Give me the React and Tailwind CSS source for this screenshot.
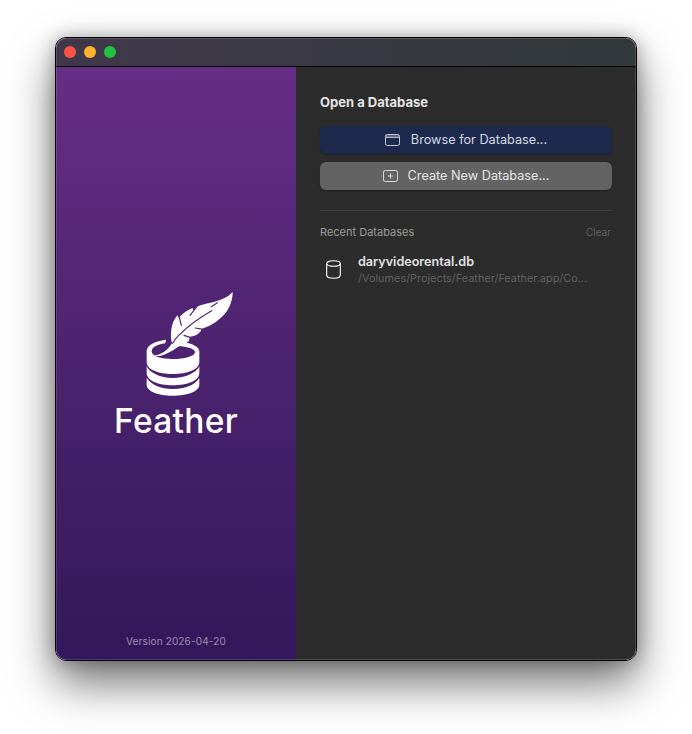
import React from "react";

function Logo() {
  return (
    <svg width="100" height="108" viewBox="0 0 300 324" fill="#fff" className="ml-[28px] shrink-0">
      <path d="M278 12 C262 30 238 38 212 44 C196 47 182 50 170 56 L160 70 L158 60 C142 66 128 76 116 90 L112 82 C102 94 96 108 94 124 C92 140 92 152 96 166 C88 180 76 192 60 198 C52 202 44 202 40 200 C48 205 60 206 72 200 C88 194 102 186 112 178 C122 172 136 170 146 160 L150 146 C160 146 172 142 182 130 L186 122 C198 118 214 112 232 98 C252 84 266 66 272 46 C276 34 278 24 278 12 Z" />
      <path d="M215 68 C180 88 140 118 116 142 C108 150 102 158 98 166" fill="none" stroke="#4c2470" strokeWidth="3.5" strokeLinecap="round" />
      <path d="M172 54 L150 82 M118 88 L124 112 M190 124 L166 120 M150 148 L132 142 M232 44 L214 56" fill="none" stroke="#4c2470" strokeWidth="3.5" strokeLinecap="round" />
      <path fillRule="evenodd" d="M78 155 C42 160 20 172 20 190 L20 222 C20 245 55 258 98 258 C142 258 178 245 178 222 L178 190 C178 178 160 168 134 163 L118 174 C148 177 165 184 165 192 C165 205 135 213 98 213 C62 213 35 205 35 190 C35 178 50 170 76 166 Z" />
      <path d="M20 235 C30 255 60 270 98 270 C138 270 168 255 178 235 L178 255 C178 278 142 292 98 292 C55 292 20 278 20 255 Z" />
      <path d="M20 270 C35 290 60 303 98 303 C138 303 165 290 178 270 L178 290 C178 310 142 323 98 323 C55 323 20 310 20 290 Z" />
    </svg>
  );
}

function FolderIcon() {
  return (
    <svg width="15" height="12" viewBox="0 0 15 12" fill="none" stroke="currentColor" strokeWidth="0.9">
      <rect x="0.5" y="0.5" width="14" height="11" rx="1.8" />
      <path d="M0.5 3.4 H14.5" />
      <path d="M1 1 H14 V3 H1 Z" fill="currentColor" fillOpacity="0.35" stroke="none" />
    </svg>
  );
}

function PlusIcon() {
  return (
    <svg width="15" height="12" viewBox="0 0 15 12" fill="none" stroke="currentColor" strokeWidth="0.9">
      <rect x="0.5" y="0.5" width="14" height="11" rx="1.8" />
      <path d="M7.5 3.4 V8.6 M4.9 6 H10.1" />
    </svg>
  );
}

function DbIcon() {
  return (
    <svg width="15" height="19" viewBox="0 0 15 19" fill="none" stroke="#fff" strokeWidth="1.1" className="ml-[6px] shrink-0">
      <ellipse cx="7.5" cy="3.5" rx="6.8" ry="2.8" />
      <path d="M0.7 3.5 V15 C0.7 17 3.8 18.3 7.5 18.3 C11.2 18.3 14.3 17 14.3 15 V3.5" />
    </svg>
  );
}

export default function App() {
  return (
    <div className="w-[692px] h-[734px] bg-white pt-[37px] pl-[55px] font-['Inter','Liberation_Sans',sans-serif] overflow-hidden">
      <div className="relative w-[582px] h-[624px] rounded-[11px] overflow-hidden flex flex-col border border-black shadow-[0_22px_45px_rgba(0,0,0,0.55),0_0_18px_rgba(0,0,0,0.28)]">
        <div className="h-[29px] shrink-0 flex items-center gap-2 pl-2 border-b border-black bg-gradient-to-r from-[#40384a] to-[#31393b]">
          <span className="w-3 h-3 rounded-full bg-[#ff5146]" />
          <span className="w-3 h-3 rounded-full bg-[#fdb32c]" />
          <span className="w-3 h-3 rounded-full bg-[#1fc23f]" />
        </div>
        <div className="flex flex-1 min-h-0">
          <div className="w-[240px] shrink-0 flex flex-col items-center bg-gradient-to-b from-[#662e85] to-[#33175a] pt-[221px]">
            <Logo />
            <div className="text-[33.5px] leading-[40px] mt-[5px] font-medium text-white tracking-[0.3px]">Feather</div>
            <div className="mt-auto mb-[12px] text-[10px] leading-[14px] tracking-[0.15px] text-white/50">Version 2026-04-20</div>
          </div>
          <div className="flex-1 bg-[#2c2c2c] px-6 pt-[27px] flex flex-col">
            <div className="text-[13px] leading-[16px] font-bold text-[#e4e4e4]">Open a Database</div>
            <button className="mt-[16px] h-[28px] rounded-[6px] bg-[#1d2a4e] text-[#d4d8e2] text-[12.7px] flex items-center justify-center gap-[11px] shadow-[0_1px_2px_rgba(0,0,0,0.3)]">
              <FolderIcon />
              Browse for Database...
            </button>
            <button className="mt-2 h-[28px] rounded-[6px] bg-[#636363] text-[#e6e6e6] text-[12.7px] flex items-center justify-center gap-[10px] shadow-[0_1px_2px_rgba(0,0,0,0.3)]">
              <PlusIcon />
              Create New Database...
            </button>
            <div className="mt-5 border-t border-[#3d3d3d]" />
            <div className="mt-[14px] flex justify-between items-center leading-[14px]">
              <span className="text-[11px] text-[#9a9a9a]">Recent Databases</span>
              <span className="text-[10px] text-[#616161] pr-px">Clear</span>
            </div>
            <div className="mt-[14px] flex items-center">
              <DbIcon />
              <div className="ml-[17px] flex flex-col">
                <span className="text-[12.6px] leading-[17px] font-semibold text-[#e2e2e2]">daryvideorental.db</span>
                <span className="text-[10.9px] leading-[16px] text-[#606060]">/Volumes/Projects/Feather/Feather.app/Co...</span>
              </div>
            </div>
          </div>
        </div>
        <span className="absolute inset-0 rounded-[10px] border border-white/15 pointer-events-none" />
      </div>
    </div>
  );
}
